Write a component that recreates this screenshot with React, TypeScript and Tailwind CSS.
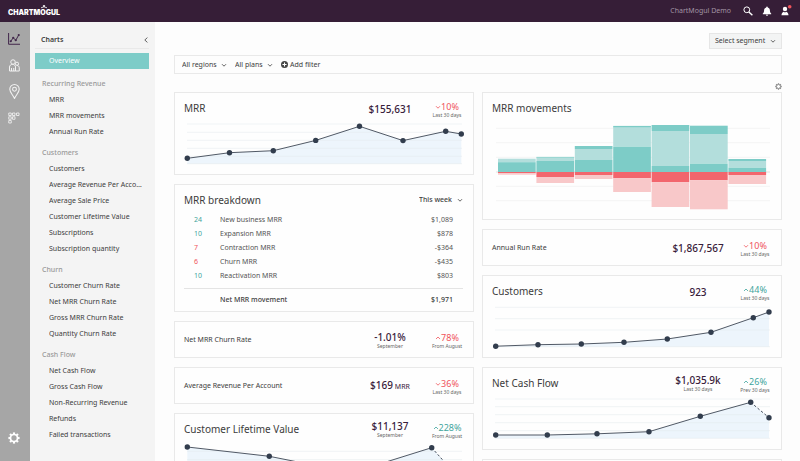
import type { ReactNode } from 'react';

type Point = [number, number];

const sections = [
  { title: 'Recurring Revenue', items: ['MRR', 'MRR movements', 'Annual Run Rate'] },
  {
    title: 'Customers',
    items: [
      'Customers',
      'Average Revenue Per Acco…',
      'Average Sale Price',
      'Customer Lifetime Value',
      'Subscriptions',
      'Subscription quantity',
    ],
  },
  { title: 'Churn', items: ['Customer Churn Rate', 'Net MRR Churn Rate', 'Gross MRR Churn Rate', 'Quantity Churn Rate'] },
  { title: 'Cash Flow', items: ['Net Cash Flow', 'Gross Cash Flow', 'Non-Recurring Revenue', 'Refunds', 'Failed transactions'] },
];

const breakdown = [
  { count: 24, label: 'New business MRR', value: '$1,089', up: true },
  { count: 10, label: 'Expansion MRR', value: '$878', up: true },
  { count: 7, label: 'Contraction MRR', value: '-$364', up: false },
  { count: 6, label: 'Churn MRR', value: '-$435', up: false },
  { count: 10, label: 'Reactivation MRR', value: '$803', up: true },
];

// top, light, mid are stacked above the axis; red, pink below it
const movements = [
  { top: 0, light: 3.5, mid: 9.8, red: 1.3, pink: 1.4 },
  { top: 0.9, light: 3.2, mid: 11, red: 5, pink: 6 },
  { top: 3, light: 11, mid: 12, red: 3, pink: 4 },
  { top: 1.8, light: 19, mid: 25.3, red: 6.3, pink: 13.7 },
  { top: 6, light: 35, mid: 6, red: 10.3, pink: 24.7 },
  { top: 8.3, light: 29.7, mid: 8.3, red: 8.3, pink: 29 },
  { top: 2, light: 6.7, mid: 4.3, red: 3, pink: 9 },
];

function Chevron({ dir = 'down', className = '' }: { dir?: 'down' | 'up' | 'left'; className?: string }) {
  const d = { down: 'M1 2.2 3 4.2 5 2.2', up: 'M1 4 3 2 5 4', left: 'M4.4 0.6 1.8 3 4.4 5.4' }[dir];
  return (
    <svg viewBox="0 0 6 6" className={`shrink-0 ${className}`} fill="none" stroke="currentColor" strokeWidth="0.8">
      <path d={d} />
    </svg>
  );
}

function Gear({ className }: { className: string }) {
  return (
    <svg viewBox="0 0 24 24" className={className} fill="none" stroke="currentColor">
      <circle cx="12" cy="12" r="7" strokeWidth="3.4" />
      <g strokeWidth="4.4">
        {[0, 45, 90, 135, 180, 225, 270, 315].map((a) => (
          <path key={a} d="M12 0.8v3.6" transform={`rotate(${a} 12 12)`} />
        ))}
      </g>
    </svg>
  );
}

function Picker({ label, option, className = '' }: { label: string; option: string; className?: string }) {
  return (
    <label className={`flex items-center gap-1 ${className}`}>
      <select aria-label={label} className="appearance-none bg-transparent outline-none">
        <option>{option}</option>
      </select>
      <Chevron className="size-[6px]" />
    </label>
  );
}

function Card({ className = '', children }: { className?: string; children?: ReactNode }) {
  return <section className={`border border-[#e9e9e9] bg-[#fefefe] ${className}`}>{children}</section>;
}

type StatProps = {
  title: string;
  value: string;
  unit?: string;
  note?: string;
  change: string;
  dir: 'up' | 'down';
  good?: boolean;
  period: string;
  small?: boolean;
};

function Stat({ title, value, unit, note, change, dir, good, period, small }: StatProps) {
  return (
    <div className={`flex items-center pl-[9px] pr-[2px] ${small ? 'h-[35px]' : 'h-[30px]'}`}>
      <h2 className={`flex-1 whitespace-nowrap ${small ? 'text-[7px]' : 'text-[10px]'}`}>{title}</h2>
      <div className="w-[66px] pt-px text-center whitespace-nowrap">
        <div className="text-[10px] leading-[12px] font-medium text-[#38203a]">
          {value}
          {unit && <span className="text-[7px] font-normal"> {unit}</span>}
        </div>
        {note && <div className="text-[5px] leading-[7px] text-[#666]">{note}</div>}
      </div>
      <div className="w-12 pt-1 text-center whitespace-nowrap">
        <div className={`flex items-center justify-center text-[9px] leading-[10px] ${good ? 'text-[#3fa59d]' : 'text-[#f0545b]'}`}>
          <Chevron dir={dir} className="size-[6px]" />
          {change}
        </div>
        <div className="text-[5px] leading-[7px] text-[#666]">{period}</div>
      </div>
    </div>
  );
}

function LineChart({ points, grid, base, dashed }: { points: Point[]; grid: number[]; base: number; dashed?: boolean }) {
  const solid = dashed ? points.slice(0, -1) : points;
  const last = points[points.length - 1];
  const str = (list: Point[]) => list.map((p) => p.join(',')).join(' ');
  return (
    <svg viewBox="0 0 298 51" className="block w-full">
      <polygon points={`${points[0][0]},${base} ${str(points)} ${last[0]},${base}`} fill="#edf5fc" />
      <g stroke="#e3e8ec" strokeWidth="0.5">
        {grid.map((y) => (
          <path key={y} d={`M12 ${y}H287`} />
        ))}
        <path d={`M12 ${base}H287`} />
      </g>
      <polyline points={str(solid)} fill="none" stroke="#3d4654" strokeWidth="0.9" />
      {dashed && (
        <polyline points={str(points.slice(-2))} fill="none" stroke="#323d4d" strokeWidth="0.9" strokeDasharray="2.5 2" />
      )}
      {points.map(([x, y]) => (
        <circle key={x} cx={x} cy={y} r="2.7" fill="#323d4d" />
      ))}
    </svg>
  );
}

function MovementsChart() {
  const axis = 49;
  const w = 38.4;
  return (
    <svg viewBox="0 0 298 96" className="block w-full">
      <g stroke="#eeeeee" strokeWidth="0.6">
        {[5.3, 19.7, 34.3, 63.3, 77.7].map((y) => (
          <path key={y} d={`M13 ${y}H287`} />
        ))}
        <path d={`M13 ${axis}H287`} stroke="#cccccc" />
      </g>
      {movements.map((m, i) => {
        const x = 15 + i * w;
        return (
          <g key={i}>
            <rect x={x} y={axis - m.mid - m.light - m.top} width={w - 0.7} height={m.top} fill="#7dccc7" />
            <rect x={x} y={axis - m.mid - m.light} width={w - 0.7} height={m.light} fill="#b3dedc" />
            <rect x={x} y={axis - m.mid} width={w - 0.7} height={m.mid} fill="#7dccc7" />
            <rect x={x} y={axis} width={w - 0.7} height={m.red} fill="#f2666d" />
            <rect x={x} y={axis + m.red} width={w - 0.7} height={m.pink} fill="#f8c8c9" />
          </g>
        );
      })}
    </svg>
  );
}

function Header() {
  return (
    <header className="flex h-[22px] shrink-0 items-center justify-between bg-[#361e37] pl-2 pr-[9px] text-white">
      <a href="#" className="relative pt-[3px] font-[Inter] text-[7px] leading-[10px] font-black">
        CHARTMOGUL
        <svg viewBox="0 0 8 4" className="absolute top-0 left-[32px] h-1 w-2" fill="none" stroke="currentColor" strokeWidth="0.8">
          <path d="M1 2.8Q4 0.8 7 2.8" />
          <circle cx="4" cy="0.9" r="0.7" fill="currentColor" />
        </svg>
      </a>
      <div className="flex items-center">
        <span className="mr-3 text-[7px] text-[#a294a3]">ChartMogul Demo</span>
        <button aria-label="Search" className="mr-[9px]">
          <svg viewBox="0 0 20 20" className="size-[10px]" fill="none" stroke="currentColor">
            <circle cx="7.6" cy="7.6" r="5.8" strokeWidth="2" />
            <path d="m11.8 11.8 7 6.8" strokeWidth="2.8" />
          </svg>
        </button>
        <button aria-label="Notifications" className="mr-[9px]">
          <svg viewBox="0 0 20 20" className="size-[10px]" fill="currentColor">
            <path d="M10 .8c.9 0 1.5.6 1.5 1.5v.5C14.3 3.5 15.6 5.6 15.8 8.5c.2 3.5.8 5 2.6 6.7v1.1H1.6v-1.1C3.4 13.5 4 12 4.2 8.5 4.4 5.6 5.7 3.5 8.5 2.8v-.5C8.5 1.4 9.1.8 10 .8ZM7.6 17.3h4.8a2.4 2.2 0 0 1-4.8 0Z" />
          </svg>
        </button>
        <button aria-label="Account">
          <svg viewBox="0 0 20 20" className="size-[10px] overflow-visible" fill="currentColor">
            <circle cx="8" cy="6" r="4.4" />
            <path d="M1 18.6c0-4 2-6.2 4.4-7l2.6 1.4 2.6-1.4c2.4.8 4.4 3 4.4 7Z" />
            <circle cx="17.4" cy="1.4" r="3.6" fill="#f0545b" />
          </svg>
        </button>
      </div>
    </header>
  );
}

function Rail() {
  return (
    <nav aria-label="Main" className="flex w-[30px] shrink-0 flex-col items-center bg-[#a6a6a6] pt-[11px] pr-[2px] pb-[17px] text-[#f2f2f2]">
      <a href="#" aria-label="Charts" className="text-[#41264a]">
        <svg viewBox="0 0 24 24" className="size-3" fill="none" stroke="currentColor">
          <path d="M1.2 0v22.5H24" strokeWidth="2" />
          <path d="m5.5 16.5 5-7 5 5L21.5 4" strokeWidth="2" />
          <g fill="currentColor" stroke="none">
            <circle cx="5.5" cy="16.5" r="2.2" />
            <circle cx="10.5" cy="9.5" r="2.2" />
            <circle cx="15.5" cy="14.5" r="2.2" />
            <circle cx="21.5" cy="4" r="2.2" />
          </g>
        </svg>
      </a>
      <a href="#" aria-label="Customers" className="mt-[14px]">
        <svg viewBox="0 0 24 26" className="h-[13px] w-3" fill="none" stroke="currentColor" strokeWidth="2">
          <circle cx="10" cy="6" r="4.5" />
          <path d="M3 24v-8c0-3 2.5-5.2 6-5.2s6 2.2 6 5.2v8Z" />
          <path d="M7 24v-6M11.5 24v-6" />
          <circle cx="18" cy="9.5" r="3.2" />
          <path d="M15 24h7.5v-6.5c0-2.5-1.5-4.3-4.5-4.5" />
        </svg>
      </a>
      <a href="#" aria-label="Map" className="mt-3">
        <svg viewBox="0 0 20 28" className="h-[15px] w-[11px]" fill="none" stroke="currentColor" strokeWidth="2">
          <path d="M10 27C7 20.5 1.2 15.5 1.2 9.8a8.8 8.8 0 0 1 17.6 0C18.8 15.5 13 20.5 10 27Z" />
          <circle cx="10" cy="9.8" r="3.6" />
        </svg>
      </a>
      <a href="#" aria-label="Cohorts" className="mt-[13px]">
        <svg viewBox="0 0 24 24" className="size-3" fill="none" stroke="currentColor" strokeWidth="1.7">
          <path d="M1.5 2h5v5h-5zM9 2h5v5H9zM17 2h5v5h-5zM1.5 9.5h5v5h-5zM9 9.5h5v5H9zM1.5 17h5v5h-5z" />
        </svg>
      </a>
      <a href="#" aria-label="Settings" className="mt-auto text-white">
        <Gear className="size-3" />
      </a>
    </nav>
  );
}

function Sidebar() {
  return (
    <aside className="w-[125px] shrink-0 bg-[#f4f4f4] pl-[5px] pr-[6px]">
      <div className="flex h-[27px] items-center justify-between border-b border-[#e9e9e9] pt-[10px] pl-[6px]">
        <h1 className="font-semibold">Charts</h1>
        <button aria-label="Collapse menu">
          <Chevron dir="left" className="size-[6px]" />
        </button>
      </div>
      <a href="#" className="mt-1 mb-[7px] flex h-4 items-center bg-[#7dccc8] pl-[14px] text-white">
        Overview
      </a>
      {sections.map((s) => (
        <div key={s.title} className="mb-[5px] leading-[16px]">
          <h2 className="pl-[7px] font-medium text-[#999]">{s.title}</h2>
          <ul>
            {s.items.map((item) => (
              <li key={item} className="pl-[14px]">
                <a href="#" className="block truncate">{item}</a>
              </li>
            ))}
          </ul>
        </div>
      ))}
    </aside>
  );
}

function Breakdown() {
  return (
    <Card className="h-[128px]">
      <div className="flex h-7 items-center justify-between pt-[2px] pl-[9px] pr-[10px]">
        <h2 className="text-[10px]">MRR breakdown</h2>
        <Picker label="Period" option="This week" className="font-medium" />
      </div>
      <div className="pl-[9px] pr-[10px]">
        <table className="w-full text-[#555]">
          <tbody>
            {breakdown.map((r) => (
              <tr key={r.label} className="h-[14px] last:h-[19px] last:align-top last:leading-[14px]">
                <td className={`w-9 pl-[10px] ${r.up ? 'text-[#3fa59d]' : 'text-[#f0545b]'}`}>{r.count}</td>
                <td>{r.label}</td>
                <td className="pr-[10px] text-right">{r.value}</td>
              </tr>
            ))}
          </tbody>
          <tfoot className="border-t border-[#e4e4e4] font-medium text-[#3c3c3c]">
            <tr className="h-6">
              <td />
              <td>Net MRR movement</td>
              <td className="pr-[10px] text-right">$1,971</td>
            </tr>
          </tfoot>
        </table>
      </div>
    </Card>
  );
}

export default function App() {
  return (
    <div className="flex h-screen flex-col overflow-hidden bg-[#fdfdfd] font-['Noto_Sans',sans-serif] text-[7px] leading-[10px] text-[#3c3c3c]">
      <Header />
      <div className="flex min-h-0 flex-1">
        <Rail />
        <Sidebar />
        <main className="min-w-0 flex-1 overflow-hidden pt-[11px] pr-[18px] pl-[19px]">
          <div className="flex justify-end">
            <Picker label="Segment" option="Select segment" className="h-4 border border-[#e6e6e6] bg-[#f3f4f4] px-[5px]" />
          </div>
          <div className="mt-[6px] flex h-[19px] items-center gap-2 border border-[#e9e9e9] px-[7px]">
            <Picker label="Region" option="All regions" />
            <Picker label="Plan" option="All plans" />
            <button className="flex items-center gap-[2px]">
              <svg viewBox="0 0 12 12" className="size-[7px]">
                <circle cx="6" cy="6" r="6" fill="#444" />
                <path d="M6 2.5v7M2.5 6h7" stroke="#fff" strokeWidth="1.8" />
              </svg>
              Add filter
            </button>
          </div>
          <div className="flex h-[18px] items-center justify-end pt-[6px]">
            <button aria-label="Dashboard settings" className="text-[#8a8a8a]">
              <Gear className="size-[7px]" />
            </button>
          </div>
          <div className="grid grid-cols-2 items-start gap-2">
            <div className="flex flex-col gap-[9px]">
              <Card>
                <Stat title="MRR" value="$155,631" change="10%" dir="down" period="Last 30 days" />
                <LineChart
                  points={[[12.3, 35.3], [54.5, 29.7], [98.3, 27.7], [140.7, 17.4], [184.5, 3.3], [228, 17.6], [270.7, 8.3], [286.3, 11]]}
                  grid={[1, 9.3, 17.3, 25.3, 33.3]}
                  base={40.7}
                />
              </Card>
              <Breakdown />
              <Card>
                <Stat small title="Net MRR Churn Rate" value="-1.01%" note="September" change="78%" dir="up" period="From August" />
              </Card>
              <Card>
                <Stat small title="Average Revenue Per Account" value="$169" unit="MRR" change="36%" dir="down" period="Last 30 days" />
              </Card>
              <Card>
                <Stat title="Customer Lifetime Value" value="$11,137" note="September" change="228%" dir="up" good period="From August" />
                <LineChart
                  dashed
                  points={[[12.3, 3], [94.3, 12.3], [176.7, 28.7], [256.7, 3.7], [286.3, 36.7]]}
                  grid={[7.3, 15.7, 24, 32.3]}
                  base={40.7}
                />
              </Card>
            </div>
            <div className="flex flex-col gap-[9px]">
              <Card>
                <h2 className="flex h-[30px] items-center pl-[9px] text-[10px]">MRR movements</h2>
                <MovementsChart />
              </Card>
              <Card>
                <Stat small title="Annual Run Rate" value="$1,867,567" change="10%" dir="down" period="Last 30 days" />
              </Card>
              <Card>
                <Stat title="Customers" value="923" change="44%" dir="up" good period="Last 30 days" />
                <LineChart
                  points={[[12.7, 40.2], [55, 38.7], [98.3, 38], [141, 36.3], [184.3, 33], [228, 26.3], [270.3, 11.7], [286, 6]]}
                  grid={[1.3, 12.7, 24]}
                  base={40.7}
                />
              </Card>
              <Card>
                <Stat title="Net Cash Flow" value="$1,035.9k" note="Last 30 days" change="26%" dir="up" good period="Prev 30 days" />
                <LineChart
                  dashed
                  points={[[12.7, 37], [64.3, 37], [114, 35.8], [166, 33.7], [217.3, 18.3], [267.7, 4.3], [286, 19.7]]}
                  grid={[1, 8.7, 16.7, 24.7, 32.7]}
                  base={40.3}
                />
              </Card>
              <Card className="h-[37px]" />
            </div>
          </div>
        </main>
      </div>
    </div>
  );
}
